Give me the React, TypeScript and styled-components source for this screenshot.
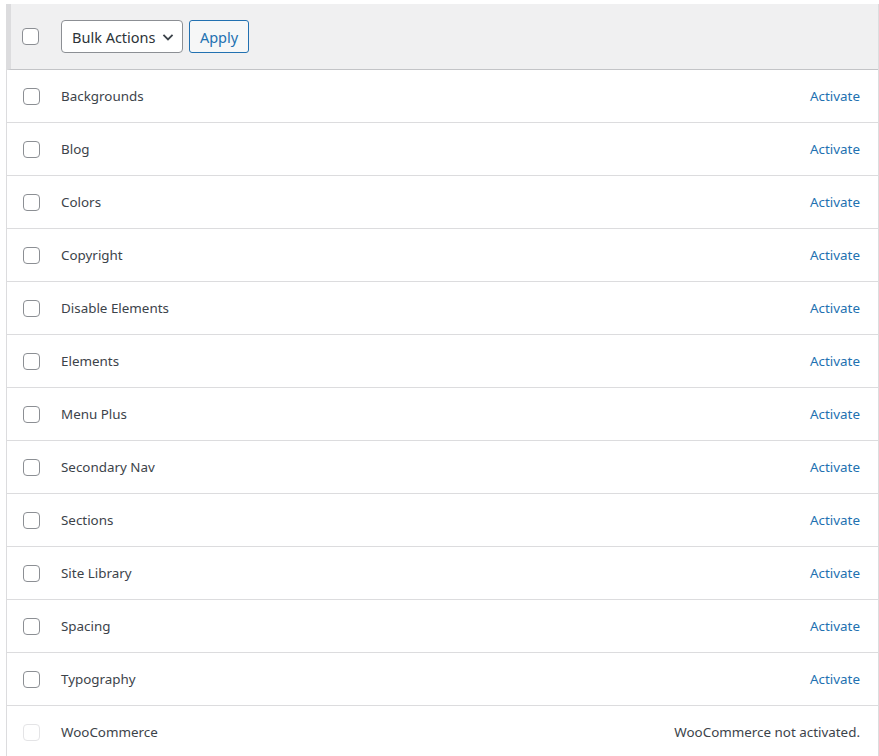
import React from "react";
import styled, { createGlobalStyle } from "styled-components";

const GlobalStyle = createGlobalStyle`
  html, body {
    margin: 0;
    padding: 0;
    background: #ffffff;
  }
  body {
    font-family: "Noto Sans", "Open Sans", sans-serif;
    color: #3c434a;
  }
`;

const modules = [
  "Backgrounds",
  "Blog",
  "Colors",
  "Copyright",
  "Disable Elements",
  "Elements",
  "Menu Plus",
  "Secondary Nav",
  "Sections",
  "Site Library",
  "Spacing",
  "Typography",
];

export default function App() {
  return (
    <>
      <GlobalStyle />
      <TableWrapper>
        <HeaderRow>
          <Checkbox />
          <SelectBox>
            <span>Bulk Actions</span>
            <svg width="14" height="14" viewBox="0 0 20 20">
              <path
                d="M3.5 7 L10 13.5 L16.5 7"
                fill="none"
                stroke="#3c434a"
                strokeWidth="2.6"
              />
            </svg>
          </SelectBox>
          <ApplyButton>Apply</ApplyButton>
        </HeaderRow>
        {modules.map((name) => (
          <Row key={name}>
            <Checkbox />
            <Name>{name}</Name>
            <ActivateLink href="#">Activate</ActivateLink>
          </Row>
        ))}
        <Row>
          <Checkbox $disabled />
          <Name>WooCommerce</Name>
          <Note>WooCommerce not activated.</Note>
        </Row>
      </TableWrapper>
    </>
  );
}

const TableWrapper = styled.div`
  margin: 4px 0 0 6px;
  width: 871px;
  border-left: 1px solid #dcdcde;
  border-right: 1px solid #dcdcde;
`;

const HeaderRow = styled.div`
  display: flex;
  align-items: center;
  height: 65px;
  background: #f0f0f1;
  border-left: 4px solid #dcdcde;
  border-bottom: 1px solid #c3c4c7;
  padding-left: 11px;
`;

const Row = styled.div`
  display: flex;
  align-items: center;
  height: 52px;
  border-bottom: 1px solid #dcdcde;
  padding: 0 18px 0 16px;
`;

const Checkbox = styled.span<{ $disabled?: boolean }>`
  box-sizing: border-box;
  flex: none;
  width: 17px;
  height: 17px;
  border: 1px solid ${(p) => (p.$disabled ? "#e4e4e6" : "#8c8f94")};
  border-radius: 4px;
  background: #fff;
`;

const SelectBox = styled.div`
  box-sizing: border-box;
  display: flex;
  align-items: center;
  justify-content: space-between;
  margin-left: 22px;
  width: 122px;
  height: 33px;
  padding: 0 7px 0 10px;
  border: 1px solid #8c8f94;
  border-radius: 4px;
  background: #fff;
  font-size: 14.5px;
  color: #2c3338;
`;

const ApplyButton = styled.button`
  box-sizing: border-box;
  margin-left: 6px;
  width: 60px;
  height: 33px;
  border: 1px solid #2271b1;
  border-radius: 3px;
  background: #f6f7f7;
  color: #2271b1;
  font-family: inherit;
  font-size: 14.5px;
  padding: 0;
`;

const Name = styled.span`
  flex: 1;
  margin-left: 21px;
  font-size: 13.4px;
  color: #3c434a;
`;

const ActivateLink = styled.a`
  font-size: 13.4px;
  color: #2271b1;
  text-decoration: none;
`;

const Note = styled.span`
  font-size: 13.4px;
  color: #3c434a;
`;
